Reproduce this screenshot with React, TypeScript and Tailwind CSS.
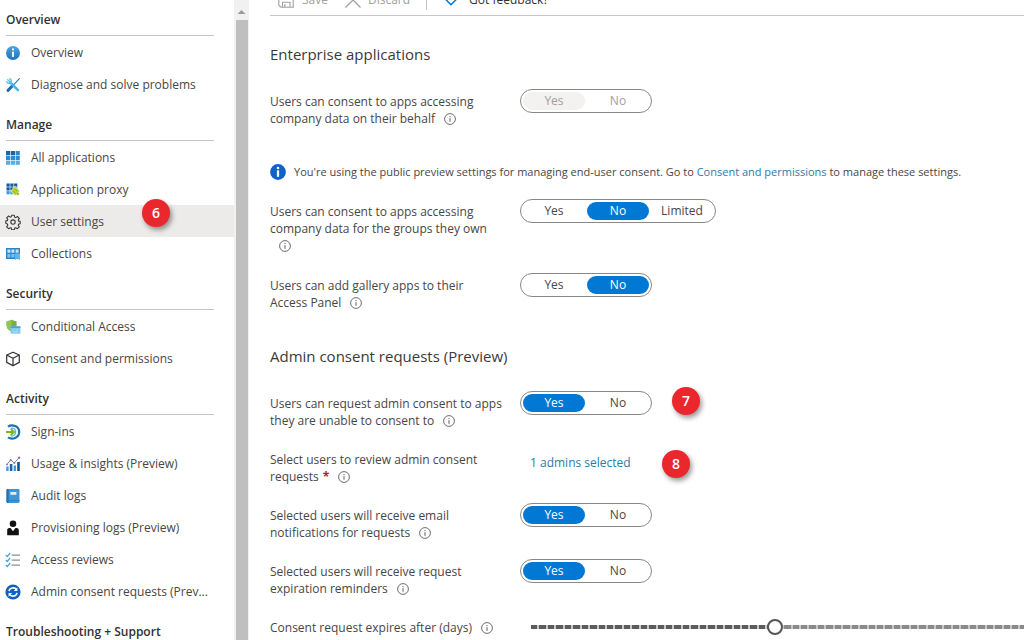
import { useId, useState, type ReactNode } from "react";

function SvgIcon({ children }: { children: ReactNode }) {
  return (
    <svg viewBox="0 0 16 16" className="size-4 shrink-0" fill="none" aria-hidden="true">
      {children}
    </svg>
  );
}

const icons: Record<string, ReactNode> = {
  info: (
    <SvgIcon>
      <defs>
        <linearGradient id="infoFill" x1="0" y1="0" x2="0" y2="1">
          <stop offset="0" stopColor="#4fa3dd" />
          <stop offset="1" stopColor="#1b75bb" />
        </linearGradient>
      </defs>
      <circle cx="8" cy="8" r="7" fill="url(#infoFill)" />
      <circle cx="8" cy="4.4" r="1.1" fill="#fff" />
      <rect x="7.1" y="6.5" width="1.8" height="5.6" rx=".5" fill="#fff" />
    </SvgIcon>
  ),
  tools: (
    <SvgIcon>
      <path d="M14.4 1.6 9 7.4" stroke="#2f7fb5" strokeWidth="1.2" strokeLinecap="round" />
      <path d="M8 8.3 3 13.4" stroke="#1d6fae" strokeWidth="3" strokeLinecap="round" />
      <path d="M5 5.2 13 13.2" stroke="#45b4ea" strokeWidth="2.4" strokeLinecap="round" />
      <path d="M2.2 2.2 4.6 4.6M1.5 4.2c.4 2.2 3 2.8 4.2 1.4 1.2-1.3.6-3.6-1.5-4.1" stroke="#5fc3f2" strokeWidth="1.4" />
    </SvgIcon>
  ),
  grid: (
    <SvgIcon>
      {[0, 1, 2].map((r) =>
        [0, 1, 2].map((c) => (
          <rect
            key={`${r}${c}`}
            x={1 + c * 4.8}
            y={1 + r * 4.8}
            width="4.2"
            height="4.2"
            fill={r === 0 ? (c === 2 ? "#2b87c8" : "#1567a8") : r === 1 ? "#2c8ad0" : "#57aee6"}
          />
        )),
      )}
    </SvgIcon>
  ),
  proxy: (
    <SvgIcon>
      {[0, 1, 2].map((r) =>
        [0, 1, 2].map((c) => (
          <rect key={`${r}${c}`} x={1.5 + c * 3.8} y={1.5 + r * 3.8} width="3.2" height="3.2" fill={r === 2 ? "#3f9ad8" : "#125c9c"} />
        )),
      )}
      <path d="m10 4.200 4.800 4.800-4.800 4.800L5.800 9z" fill="#b5d334" stroke="#fff" strokeWidth=".6" />
      <path d="m8.400 9 2 2.200M10.200 7l1.800 2" stroke="#7fae22" strokeWidth="1" />
      <circle cx="12.800" cy="11.800" r="1.500" fill="#a3cc33" />
    </SvgIcon>
  ),
  gear: (
    <SvgIcon>
      <path
        d="M6.7 1.3h2.6l.4 1.9 1 .4 1.7-1.1 1.9 1.9-1.1 1.7.4 1 1.6.3v2.4l-1.6.3-.4 1.1 1.1 1.7-1.9 1.8-1.7-1-1 .4-.4 1.7H6.7l-.4-1.7-1-.4-1.7 1-1.9-1.8 1.1-1.7-.4-1.1L.8 9.3V6.9l1.6-.3.4-1-1.1-1.7 1.9-1.9 1.7 1.1 1-.4z"
        stroke="#3b3a39"
        strokeWidth="1.1"
        strokeLinejoin="round"
      />
      <circle cx="8" cy="8.1" r="2.2" stroke="#3b3a39" strokeWidth="1.1" />
    </SvgIcon>
  ),
  collections: (
    <SvgIcon>
      <rect x="1" y="2" width="14" height="11" fill="#2a84c6" />
      <path d="M2.4 3.4h3v3.4h-3zM6.4 3.4h3v3.4h-3zM10.6 3.4h3v3.4h-3z" fill="#c5e4f7" />
      <path d="M2.4 8h3v3.4h-3zM6.4 8h3v3.4h-3z" fill="#7cc3ee" />
      <path d="M10 7.4h5v6.8l-2.5-1.6-2.5 1.6z" fill="#5fb7ec" />
    </SvgIcon>
  ),
  conditional: (
    <SvgIcon>
      <path d="M6.6.8c1.7.9 3.4 1.3 5 1.5v4.300c0 2.900-2.300 4.900-5 6-2.700-1.100-5-3.100-5-6V2.300c1.700-.2 3.400-.6 5-1.500z" fill="#76b043" />
      <path d="M6.6.8v11.800c-2.700-1.100-5-3.100-5-6V2.300c1.700-.2 3.400-.6 5-1.500z" fill="#93c54b" />
      <rect x="5.6" y="7.4" width="9.8" height="7.2" fill="#7cc8f4" />
      <path d="M5.6 7.4h9.8v1.500H5.600z" fill="#3f9fdc" />
      <path d="M7.600 11h2M11 11h2.400M7.600 12.800h5.800" stroke="#b5e0f8" strokeWidth=".8" />
    </SvgIcon>
  ),
  cube: (
    <SvgIcon>
      <path d="M8 1.2 14.300 4v7.400L8 14.800 1.700 11.400V4zM1.700 4 8 7.200 14.300 4M8 7.200v7.600" stroke="#323130" strokeWidth="1.2" strokeLinejoin="round" />
    </SvgIcon>
  ),
  signin: (
    <SvgIcon>
      <path d="M3 2.600C7 .2 14.200 1.800 14.200 8S7 15.800 3 13.400" stroke="#1b70b5" strokeWidth="2.200" />
      <path d="M5.600 4.400c2.800-1 5 .8 5 3.600s-2.200 4.600-5 3.600" stroke="#58b4e8" strokeWidth="1.300" />
      <path d="M1 8h7.600M5.800 5l3.200 3-3.200 3" stroke="#7fb51f" strokeWidth="1.800" />
    </SvgIcon>
  ),
  chart: (
    <SvgIcon>
      <path d="M1.200 10.500h2.400V15H1.200z" fill="#3f9ce0" />
      <path d="M4.800 8h2.600v7H4.800z" fill="#1b65b3" />
      <path d="M8.600 9.500h2.400V15H8.600z" fill="#3f9ce0" />
      <path d="M12.200 6h2.600v9h-2.600z" fill="#124f93" />
      <path d="M2 8.400 5.700 4l3.600 3L14 1.800" stroke="#8b7a9e" strokeWidth="1" />
      <circle cx="2" cy="8.400" r="1" fill="#8b7a9e" />
      <circle cx="5.700" cy="4.200" r="1.100" fill="#8b7a9e" />
      <circle cx="9.300" cy="7" r="1" fill="#8b7a9e" />
      <circle cx="14" cy="1.800" r="1.200" fill="#8b7a9e" />
    </SvgIcon>
  ),
  book: (
    <SvgIcon>
      <rect x="1.500" y="1" width="13" height="14" rx="1.200" fill="#3b97d8" />
      <path d="M1.500 2.200C1.500 1.500 2 1 2.700 1H3.600v14H2.700c-.7 0-1.200-.5-1.200-1.200z" fill="#1f70b3" />
      <path d="M1.500 12.600h13" stroke="#2679ba" strokeWidth=".8" />
      <rect x="5.400" y="4" width="6" height="2.800" fill="#d9effb" />
    </SvgIcon>
  ),
  person: (
    <SvgIcon>
      <circle cx="8" cy="3.800" r="3.300" fill="#111" />
      <path d="M2.200 15.200V10c0-1.300 1-2 2.200-2h1.200L8 11.200 10.400 8h1.200c1.200 0 2.200.7 2.200 2v5.200z" fill="#111" />
    </SvgIcon>
  ),
  checklist: (
    <SvgIcon>
      <path d="M6.600 3.200H15M6.600 8.200H15M6.600 13.200H15" stroke="#8f8f8f" strokeWidth="1.200" />
      <path d="m.8 3 1.500 1.500L5.200 1M.8 8l1.500 1.500L5.200 6M.8 13l1.500 1.500L5.200 11" stroke="#4ba3d4" strokeWidth="1.200" />
    </SvgIcon>
  ),
  refresh: (
    <SvgIcon>
      <circle cx="8" cy="8" r="7.600" fill="#1160c4" />
      <path d="M4 7.200C4.500 3.600 9.600 2.700 11.600 5.700M12 8.800c-.5 3.600-5.600 4.500-7.600 1.500" stroke="#fff" strokeWidth="1.500" />
      <path d="M12.400 3.300v3.600H8.800zM3.600 12.700V9.100h3.600z" fill="#fff" />
    </SvgIcon>
  ),
};

const sections = [
  {
    title: "Overview",
    items: [
      { icon: "info", label: "Overview" },
      { icon: "tools", label: "Diagnose and solve problems" },
    ],
  },
  {
    title: "Manage",
    items: [
      { icon: "grid", label: "All applications" },
      { icon: "proxy", label: "Application proxy" },
      { icon: "gear", label: "User settings", active: true, step: "6" },
      { icon: "collections", label: "Collections" },
    ],
  },
  {
    title: "Security",
    items: [
      { icon: "conditional", label: "Conditional Access" },
      { icon: "cube", label: "Consent and permissions" },
    ],
  },
  {
    title: "Activity",
    items: [
      { icon: "signin", label: "Sign-ins" },
      { icon: "chart", label: "Usage & insights (Preview)" },
      { icon: "book", label: "Audit logs" },
      { icon: "person", label: "Provisioning logs (Preview)" },
      { icon: "checklist", label: "Access reviews" },
      { icon: "refresh", label: "Admin consent requests (Prev..." },
    ],
  },
  { title: "Troubleshooting + Support", items: [] },
] as {
  title: string;
  items: { icon: string; label: string; active?: boolean; step?: string }[];
}[];

function StepBadge({ children, className }: { children: ReactNode; className: string }) {
  return (
    <span
      className={`absolute flex size-7 items-center justify-center rounded-full bg-[#e9272c] text-sm font-semibold text-white shadow-[2px_3px_5px_rgba(0,0,0,0.4)] ${className}`}
    >
      {children}
    </span>
  );
}

function Sidebar() {
  return (
    <div className="flex shrink-0">
      <nav className="w-[234px]" aria-label="Enterprise applications">
        {sections.map((section) => (
          <section key={section.title} className="group">
            <h2 className="mr-5 ml-1.5 border-b border-[#c8c6c4] pt-[15px] pb-[5px] leading-5 font-semibold text-[#323130] group-first:pt-2.5">
              {section.title}
            </h2>
            <ul>
              {section.items.map((item) => (
                <li key={item.label} className="relative">
                  <a
                    href="#"
                    aria-current={item.active ? "page" : undefined}
                    className={`flex h-8 items-center gap-2.5 pt-0.5 pr-5 pl-[5px] ${item.active ? "bg-[#edebe9]" : ""}`}
                  >
                    {icons[item.icon]}
                    <span className="truncate">{item.label}</span>
                  </a>
                  {item.step && <StepBadge className="-top-1.5 left-[142px]">{item.step}</StepBadge>}
                </li>
              ))}
            </ul>
          </section>
        ))}
      </nav>
      <div className="flex w-[15px] flex-col bg-[#f1f1f1] pt-1" aria-hidden="true">
        <svg viewBox="0 0 15 16" className="h-4 w-full">
          <path d="M3.500 10 7.500 6l4 4z" fill="#9a9a9a" />
        </svg>
        <div className="mr-px ml-0.5 flex-1 bg-[#bfbfbf]" />
      </div>
    </div>
  );
}

function Toolbar() {
  return (
    <div className="flex h-4 items-end overflow-hidden border-b border-[#c8c6c4] pb-[5px] pl-2 leading-5 text-[#a19f9d]">
      <button type="button" disabled className="flex items-center gap-2">
        <svg viewBox="0 0 16 16" className="size-4" fill="none" stroke="currentColor" strokeWidth="1.1" aria-hidden="true">
          <path d="M.8.8h12.400l2 2v12.400H3l-2.200-2zM3.500.8v6h9v-6M4.500 15.200v-5h7.500v5M6.800 12v3.200" />
        </svg>
        Save
      </button>
      <button type="button" disabled className="ml-4 flex items-center gap-1.5">
        <svg viewBox="0 0 18 18" className="size-[18px]" fill="none" stroke="currentColor" strokeWidth="1.3" aria-hidden="true">
          <path d="m1.500 1.500 15 15M16.500 1.500l-15 15" />
        </svg>
        Discard
      </button>
      <span className="ml-4 h-4 w-px bg-[#c8c6c4]" />
      <button type="button" className="ml-4 flex items-center gap-2.5 text-[#323130]">
        <svg viewBox="0 0 16 16" className="size-4" fill="none" aria-hidden="true">
          <path d="M8 12.800 2.800 7.500C1.200 5.500 2 2.500 4.600 2.500 6.200 2.500 7.400 3.600 8 5c.6-1.400 1.800-2.500 3.400-2.500 2.600 0 3.400 3 1.800 5z" stroke="#0078d4" strokeWidth="1.5" />
        </svg>
        Got feedback?
      </button>
    </div>
  );
}

function InfoHint() {
  return (
    <svg viewBox="0 0 12 12" className="ml-[9px] inline-block size-3 align-[-2px]" fill="none" role="img" aria-label="More information">
      <circle cx="6" cy="6" r="5.4" stroke="#605e5c" strokeWidth=".9" />
      <path d="M6 5.200v3.600M6 3.100v1.100" stroke="#605e5c" strokeWidth="1" />
    </svg>
  );
}

function Field({
  label,
  required,
  children,
}: {
  label: string;
  required?: boolean;
  children: (labelId: string) => ReactNode;
}) {
  const id = useId();
  return (
    <div className="flex items-start">
      <div className="w-[250px] shrink-0 pt-1 pr-4 leading-[17px]">
        <label id={id} htmlFor={`${id}c`}>
          {label}
        </label>
        {required && <span className="ml-1 font-bold text-[#a4262c]">*</span>}
        <InfoHint />
      </div>
      {children(id)}
    </div>
  );
}

function Toggle({
  options = ["Yes", "No"],
  initial,
  disabled,
  labelId,
}: {
  options?: string[];
  initial: string;
  disabled?: boolean;
  labelId: string;
}) {
  const [value, setValue] = useState(initial);
  return (
    <div role="group" aria-labelledby={labelId} className="flex h-6 gap-0.5 rounded-full border border-[#8a8886] p-0.5">
      {options.map((option) => {
        const selected = option === value;
        const tone = disabled
          ? selected
            ? "bg-[#f3f2f1] text-[#a19f9d]"
            : "text-[#a19f9d]"
          : selected
            ? "bg-[#0078d4] text-white"
            : "text-[#484644]";
        return (
          <button
            key={option}
            type="button"
            disabled={disabled}
            aria-pressed={selected}
            onClick={() => setValue(option)}
            className={`flex w-[62px] items-center justify-center rounded-full ${tone}`}
          >
            {option}
          </button>
        );
      })}
    </div>
  );
}

const MAX_DAYS = 60;

function DaysSlider({ labelId }: { labelId: string }) {
  const [days, setDays] = useState(30);
  return (
    <div className="ml-[3px] grid h-6 w-128 shrink-0 items-center">
      <div className="col-start-1 row-start-1 mx-2 flex h-1 gap-0.5 bg-[#c8c8c8]">
        {Array.from({ length: MAX_DAYS - 1 }, (_, i) => (
          <span key={i} className={`flex-1 ${i < days - 1 ? "bg-[#5c5c5c]" : "bg-[#8a8a8a]"}`} />
        ))}
      </div>
      <input
        id={`${labelId}c`}
        type="range"
        min={1}
        max={MAX_DAYS}
        value={days}
        onChange={(e) => setDays(Number(e.target.value))}
        className="col-start-1 row-start-1 h-4 w-full appearance-none bg-transparent [&::-webkit-slider-thumb]:size-4 [&::-webkit-slider-thumb]:appearance-none [&::-webkit-slider-thumb]:rounded-full [&::-webkit-slider-thumb]:border-2 [&::-webkit-slider-thumb]:border-[#555] [&::-webkit-slider-thumb]:bg-white"
      />
    </div>
  );
}

export default function App() {
  return (
    <div className="flex h-screen overflow-hidden bg-white font-['Open_Sans','Noto_Sans',sans-serif] text-xs text-[#484644]">
      <Sidebar />
      <main className="min-w-0 flex-1 overflow-hidden pl-[21px]">
        <Toolbar />
        <h2 className="mt-7 text-[15px] leading-5 text-[#3b3a39]">Enterprise applications</h2>
        <div className="mt-[25px]">
          <Field label="Users can consent to apps accessing company data on their behalf">
            {(id) => <Toggle labelId={id} initial="Yes" disabled />}
          </Field>
        </div>
        <p className="mt-[37px] flex h-4 items-center gap-2 text-[11px] whitespace-nowrap">
          <svg viewBox="0 0 16 16" className="size-4 shrink-0" aria-hidden="true">
            <circle cx="8" cy="8" r="7.9" fill="#0f62c9" />
            <circle cx="8" cy="4" r="1.3" fill="#fff" />
            <rect x="6.900" y="6.300" width="2.200" height="6.500" fill="#fff" />
          </svg>
          <span>
            You're using the public preview settings for managing end-user consent. Go to{" "}
            <a href="#" className="text-[#2b7ba8]">
              Consent and permissions
            </a>{" "}
            to manage these settings.
          </span>
        </p>
        <div className="mt-[19px] flex flex-col gap-[19px]">
          <Field label="Users can consent to apps accessing company data for the groups they own">
            {(id) => <Toggle labelId={id} initial="No" options={["Yes", "No", "Limited"]} />}
          </Field>
          <Field label={"Users can add gallery apps to their Access\u00a0Panel"}>
            {(id) => <Toggle labelId={id} initial="No" />}
          </Field>
        </div>
        <h2 className="mt-[35px] text-[15px] leading-5 text-[#3b3a39]">Admin consent requests (Preview)</h2>
        <div className="mt-[25px] flex flex-col gap-[18px]">
          <Field label="Users can request admin consent to apps they are unable to consent to">
            {(id) => (
              <div className="relative">
                <Toggle labelId={id} initial="Yes" />
                <StepBadge className="-top-1 left-[152px]">7</StepBadge>
              </div>
            )}
          </Field>
          <Field label="Select users to review admin consent requests" required>
            {(id) => (
              <div className="relative pt-1.5 pl-2.5">
                <a id={`${id}c`} href="#" className="leading-5 text-[#2b7ba8]">
                  1 admins selected
                </a>
                <StepBadge className="top-[3px] left-[142px]">8</StepBadge>
              </div>
            )}
          </Field>
          <Field label="Selected users will receive email notifications for requests">
            {(id) => <Toggle labelId={id} initial="Yes" />}
          </Field>
          <Field label="Selected users will receive request expiration reminders">
            {(id) => <Toggle labelId={id} initial="Yes" />}
          </Field>
          <Field label="Consent request expires after (days)">{(id) => <DaysSlider labelId={id} />}</Field>
        </div>
      </main>
    </div>
  );
}
